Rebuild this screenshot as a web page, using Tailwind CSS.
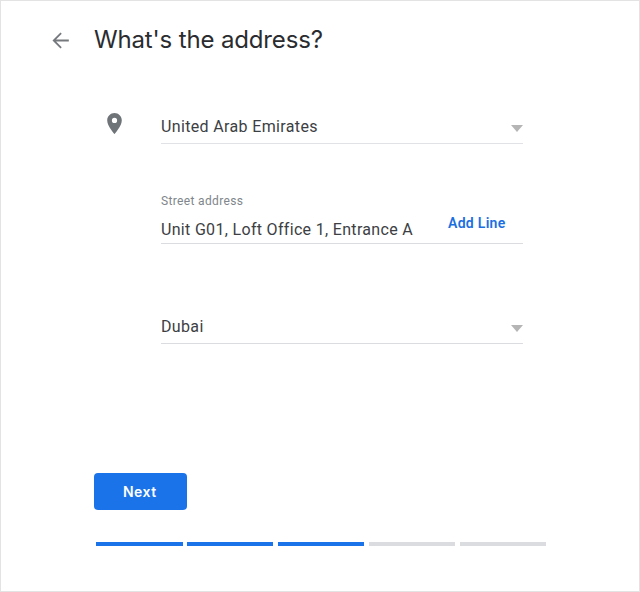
<!DOCTYPE html>
<html lang="en">
<head>
  <meta charset="UTF-8" />
  <title>What's the address?</title>
  <script src="https://cdn.jsdelivr.net/npm/@tailwindcss/browser@4"></script>
</head>
<body class="bg-white">
  <div class="w-[640px] h-[592px] border border-[#e3e3e3] bg-white flex flex-col font-['Roboto',sans-serif] text-[#3c4043] overflow-hidden">
    <!-- header -->
    <div class="flex items-center h-[76px] pt-[2px] pl-[47px] shrink-0">
      <svg class="w-[25px] h-[25px] mr-[21px]" viewBox="0 0 24 24" fill="none" stroke="#75797d" stroke-width="1.7"><path d="M20 12H5.5M12.6 4.9 5.5 12l7.1 7.1"/></svg>
      <h1 class="text-[24px] leading-[30px] font-['Inter',sans-serif] font-normal tracking-[-0.15px] text-[#2a2c2f]">What's the address?</h1>
    </div>

    <!-- fields -->
    <div class="flex pl-[101px] pt-[33px]">
      <svg class="w-[25px] h-[25px] mt-[1px] mr-[34px]" viewBox="0 0 24 24" fill="#6f7478"><path d="M12 2C8.13 2 5 5.13 5 9c0 5.25 7 13 7 13s7-7.75 7-13c0-3.87-3.13-7-7-7zm0 9.5a2.5 2.5 0 0 1 0-5 2.5 2.5 0 0 1 0 5z"/></svg>
      <div class="w-[362px] flex flex-col">
        <div class="h-[34px] border-b border-[#e0e2e5] flex items-start justify-between">
          <span class="text-[16px] leading-[24px] mt-[5px] tracking-[0.35px]">United Arab Emirates</span>
          <span class="mt-[15px] border-x-[6.5px] border-x-transparent border-t-[7px] border-t-[#b5b5b5]"></span>
        </div>
        <div class="h-[100px] border-b border-[#dadce0] flex flex-col justify-end">
          <span class="text-[12px] leading-[16px] tracking-[0.35px] text-[#80868b]">Street address</span>
          <div class="flex items-start h-[32px] mt-[2px]">
            <span class="text-[16px] leading-[24px] mt-[7px] w-[287px] whitespace-nowrap tracking-[0.32px]">Unit G01, Loft Office 1, Entrance A</span>
            <span class="text-[14px] leading-[20px] mt-[2px] font-semibold tracking-[0.3px] text-[#1a6fe0]">Add Line</span>
          </div>
        </div>
        <div class="h-[100px] border-b border-[#dadce0] flex items-end justify-between">
          <span class="text-[16px] leading-[24px] mb-[4px] tracking-[0.35px]">Dubai</span>
          <span class="mb-[11px] border-x-[6.5px] border-x-transparent border-t-[7px] border-t-[#b5b5b5]"></span>
        </div>
      </div>
    </div>

    <!-- footer -->
    <div class="mt-[129px] pl-[93px]">
      <button class="w-[92.5px] h-[37px] pb-[1px] pr-[1px] rounded-[4px] bg-[#1a73e8] text-white text-[14px] tracking-[0.5px] font-['Inter',sans-serif] font-semibold">Next</button>
      <div class="flex gap-[4.4px] mt-[32px] ml-[2px]">
        <div class="w-[86.5px] h-[4px] bg-[#1a73e8]"></div>
        <div class="w-[86.5px] h-[4px] bg-[#1a73e8]"></div>
        <div class="w-[86.5px] h-[4px] bg-[#1a73e8]"></div>
        <div class="w-[86.5px] h-[4px] bg-[#dadce0]"></div>
        <div class="w-[86.5px] h-[4px] bg-[#dadce0]"></div>
      </div>
    </div>
  </div>
</body>
</html>
